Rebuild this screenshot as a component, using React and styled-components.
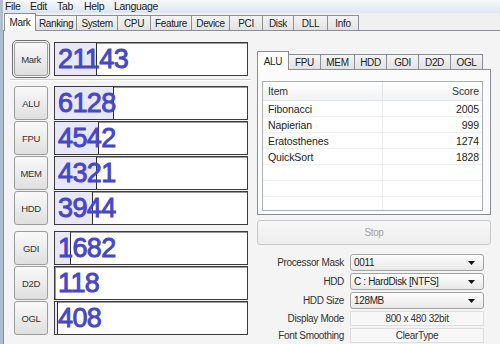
import React from 'react'
import styled, { createGlobalStyle } from 'styled-components'

const GlobalStyle = createGlobalStyle`
  html, body { margin: 0; padding: 0; }
  body {
    width: 500px;
    height: 344px;
    overflow: hidden;
    background: #f0f0f0;
    font-family: "Liberation Sans", Arial, sans-serif;
    font-size: 10px;
    letter-spacing: -0.35px;
    color: #1e1e1e;
  }
  * { box-sizing: border-box; }
`

const Window = styled.div`
  width: 500px;
  height: 344px;
  display: flex;
  flex-direction: column;
  border-left: 3px solid #aebdd0;
  overflow: hidden;
`
const MenuBar = styled.div`
  height: 13px;
  display: flex;
  align-items: center;
  padding-left: 2px;
  line-height: 13px;
  font-size: 10.5px;
  background: linear-gradient(#f7f9fc, #dce5f2);
`
const MenuItem = styled.span`
  width: ${p => p.$w}px;
  color: #1e1e1e;
`
const TabStrip = styled.div`
  height: 17px;
  display: flex;
  align-items: flex-end;
  padding-left: 1px;
  position: relative;
  z-index: 1;
`
const Tab = styled.div`
  width: ${p => p.$w}px;
  height: ${p => (p.$active ? 18 : 15)}px;
  margin-bottom: ${p => (p.$active ? -1 : 0)}px;
  margin-left: -1px;
  border: 1px solid #8b8e96;
  border-bottom: none;
  background: ${p => (p.$active ? '#fff' : 'linear-gradient(#f4f4f4, #e2e2e2)')};
  display: flex;
  align-items: center;
  justify-content: center;
  color: #222;
  position: relative;
  z-index: ${p => (p.$active ? 2 : 1)};
  &:first-child { margin-left: 0; }
`
const InnerTab = styled(Tab)`
  height: ${p => (p.$active ? 19 : 15)}px;
`
const Panel = styled.div`
  flex: 1;
  display: flex;
  gap: 8px;
  padding: 11px 0 0 10px;
  border-top: 1px solid #8b8e96;
  border-left: 1px solid #8b8e96;
  background: #f4f4f4;
`
const LeftColumn = styled.div`
  width: 234px;
  display: flex;
  flex-direction: column;
`
const Group = styled.div`
  display: flex;
  flex-direction: column;
  gap: 1px;
  margin-top: ${p => p.$top || 0}px;
`
const Row = styled.div`
  height: 34px;
  display: flex;
  gap: 6px;
`
const SideButton = styled.div`
  width: 34px;
  height: 34px;
  border: 1px solid #9c9c9c;
  border-radius: 3px;
  background: linear-gradient(#f9f9f9, #dfdfdf);
  display: flex;
  align-items: center;
  justify-content: center;
  font-size: 9.5px;
  color: #333;
  ${p => p.$focused && 'outline: 1px solid #707070; outline-offset: 1px;'}
`
const Separator = styled.div`
  height: 0;
  border-top: 1px solid #cdcdcd;
  border-bottom: 1px solid #fff;
  margin: 3px -3px 5px -4px;
`
const Bar = styled.div`
  flex: 1;
  position: relative;
  background: #fff;
  border: 1px solid #3c3c3c;
  box-shadow: inset 1px 1px 0 #9a9a9a;
  display: flex;
  align-items: center;
  padding-left: 3px;
  overflow: hidden;
`
const Fill = styled.div`
  position: absolute;
  left: 0;
  top: 0;
  bottom: 0;
  background: #e7e7f7;
  border-right: 1px solid #2e2e2e;
`
const Score = styled.span`
  position: relative;
  font-family: "Liberation Sans", Arial, sans-serif;
  font-size: 27px;
  letter-spacing: -0.6px;
  line-height: 1;
  color: #4646c8;
  -webkit-text-stroke: 0.9px #4646c8;
`
const RightColumn = styled.div`
  width: 235px;
  display: flex;
  flex-direction: column;
  padding: 9px 0 0 1px;
`
const InnerTabs = styled.div`
  height: 18px;
  display: flex;
  align-items: flex-end;
  position: relative;
  z-index: 1;
`
const InnerPanel = styled.div`
  height: 146px;
  border: 1px solid #8b8e96;
  background: #fbfbfb;
  padding: 11px 7px 3px 4px;
`
const ListView = styled.div`
  height: 100%;
  border: 1px solid #a9aeb6;
  background: #fff;
  display: grid;
  grid-template-columns: 120px 1fr;
  grid-template-rows: 19px;
  grid-auto-rows: 16px;
  overflow: hidden;
  font-size: 10.5px;
  letter-spacing: -0.1px;
  color: #222;
`
const HeadCell = styled.div`
  display: flex;
  align-items: center;
  justify-content: ${p => (p.$right ? 'flex-end' : 'flex-start')};
  padding: 0 3px 0 5px;
  background: linear-gradient(#fff, #f1f2f4);
  border-bottom: 1px solid #e2e4e8;
  border-right: ${p => (p.$right ? 'none' : '1px solid #e2e4e8')};
  color: #333;
`
const Cell = styled.div`
  display: flex;
  align-items: center;
  justify-content: ${p => (p.$right ? 'flex-end' : 'flex-start')};
  padding: 0 3px 0 5px;
  border-bottom: 1px solid #eff0f2;
  border-right: ${p => (p.$right ? 'none' : '1px solid #eceef1')};
`
const StopButton = styled.button`
  margin-top: 5px;
  height: 25px;
  width: 234px;
  border: 1px solid #c9c9c9;
  border-radius: 3px;
  background: linear-gradient(#f7f7f7, #ededed);
  color: #a3a3a3;
  font-family: inherit;
  font-size: 10px;
  letter-spacing: inherit;
  padding: 0;
`
const Form = styled.div`
  margin-top: 9px;
  display: grid;
  grid-template-columns: 87px 134px;
  column-gap: 6px;
  row-gap: 2px;
`
const Label = styled.div`
  height: ${p => p.$h}px;
  display: flex;
  align-items: center;
  justify-content: flex-end;
  color: #333;
`
const Select = styled.div`
  height: 17px;
  border: 1px solid #a3a3a3;
  border-radius: 3px;
  background: linear-gradient(#fefefe, #e8e8e8);
  display: flex;
  align-items: center;
  justify-content: space-between;
  padding: 0 8px 0 3px;
  color: #222;
`
const InfoBox = styled.div`
  height: 15px;
  border: 1px solid #dedede;
  background: #f7f7f7;
  display: flex;
  align-items: center;
  justify-content: center;
  color: #333;
`

const menus = [['File', 25], ['Edit', 27], ['Tab', 27], ['Help', 30], ['Language', 50]]
const mainTabs = [
  ['Mark', 32], ['Ranking', 42], ['System', 42], ['CPU', 34], ['Feature', 42],
  ['Device', 39], ['PCI', 34], ['Disk', 32], ['DLL', 35], ['Info', 32],
]
const subTabs = [['ALU', 32], ['FPU', 33], ['MEM', 35], ['HDD', 33], ['GDI', 33], ['D2D', 33], ['OGL', 33]]

const groupA = [
  { name: 'ALU', value: 6128, fill: 59 },
  { name: 'FPU', value: 4542, fill: 44 },
  { name: 'MEM', value: 4321, fill: 42 },
  { name: 'HDD', value: 3944, fill: 38 },
]
const groupB = [
  { name: 'GDI', value: 1682, fill: 16 },
  { name: 'D2D', value: 118, fill: 0 },
  { name: 'OGL', value: 408, fill: 3 },
]
const items = [
  ['Fibonacci', 2005], ['Napierian', 999], ['Eratosthenes', 1274], ['QuickSort', 1828],
  ['', ''], ['', ''], ['', ''],
]

function Arrow() {
  return (
    <svg width="7" height="4" viewBox="0 0 7 4">
      <polygon points="0,0 7,0 3.5,4" fill="#111" />
    </svg>
  )
}

function ScoreRow({ name, value, fill, focused }) {
  return (
    <Row>
      <SideButton $focused={focused}>{name}</SideButton>
      <Bar>
        {fill > 0 && <Fill style={{ width: fill }} />}
        <Score>{value}</Score>
      </Bar>
    </Row>
  )
}

export default function App() {
  return (
    <>
      <GlobalStyle />
      <Window>
        <MenuBar>
          {menus.map(([m, w]) => <MenuItem key={m} $w={w}>{m}</MenuItem>)}
        </MenuBar>
        <TabStrip>
          {mainTabs.map(([t, w], i) => <Tab key={t} $w={w} $active={i === 0}>{t}</Tab>)}
        </TabStrip>
        <Panel>
          <LeftColumn>
            <ScoreRow name="Mark" value={21143} fill={42} focused />
            <Separator />
            <Group>
              {groupA.map(r => <ScoreRow key={r.name} {...r} />)}
            </Group>
            <Group $top={6}>
              {groupB.map(r => <ScoreRow key={r.name} {...r} />)}
            </Group>
          </LeftColumn>
          <RightColumn>
            <InnerTabs>
              {subTabs.map(([t, w], i) => <InnerTab key={t} $w={w} $active={i === 0}>{t}</InnerTab>)}
            </InnerTabs>
            <InnerPanel>
              <ListView>
                <HeadCell>Item</HeadCell>
                <HeadCell $right>Score</HeadCell>
                {items.map(([n, s], i) => (
                  <React.Fragment key={i}>
                    <Cell>{n}</Cell>
                    <Cell $right>{s}</Cell>
                  </React.Fragment>
                ))}
              </ListView>
            </InnerPanel>
            <StopButton disabled>Stop</StopButton>
            <Form>
              <Label $h={17}>Processor Mask</Label>
              <Select>0011<Arrow /></Select>
              <Label $h={17}>HDD</Label>
              <Select>C : HardDisk [NTFS]<Arrow /></Select>
              <Label $h={17}>HDD Size</Label>
              <Select>128MB<Arrow /></Select>
              <Label $h={15}>Display Mode</Label>
              <InfoBox>800 x 480 32bit</InfoBox>
              <Label $h={15}>Font Smoothing</Label>
              <InfoBox>ClearType</InfoBox>
            </Form>
          </RightColumn>
        </Panel>
      </Window>
    </>
  )
}
